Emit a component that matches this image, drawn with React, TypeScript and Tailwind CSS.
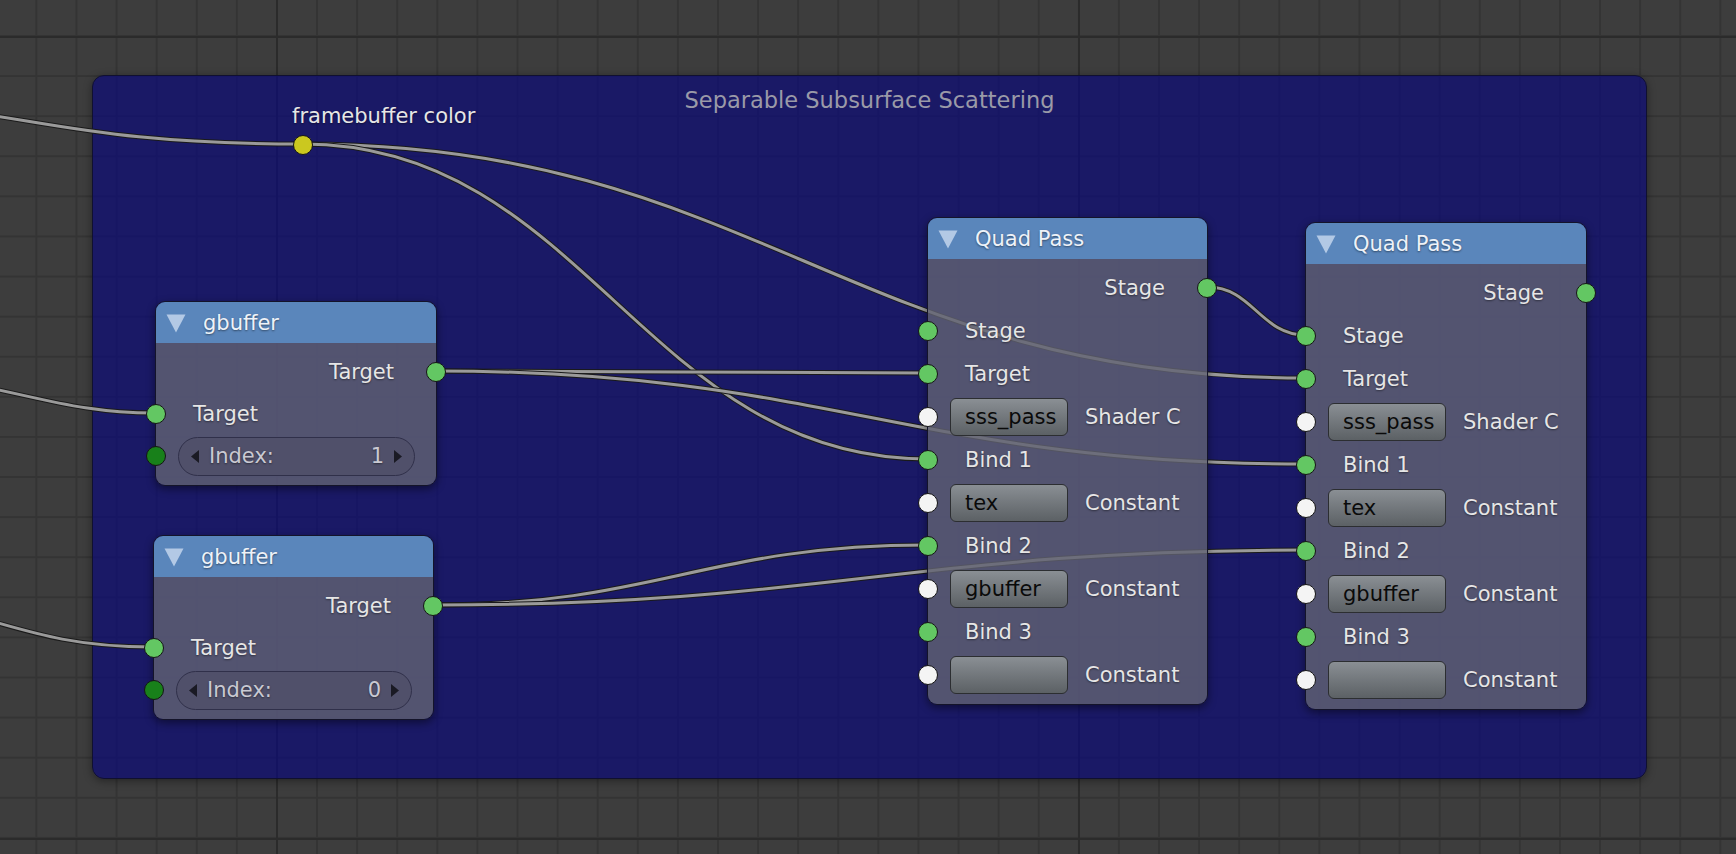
import React from 'react';

type Row =
  | { kind: 'out'; label: string }
  | { kind: 'in'; label: string }
  | { kind: 'field'; value: string; label: string }
  | { kind: 'index'; value: string };

type NodeData = {
  x: number;
  y: number;
  w: number;
  title: string;
  rowH: number;
  pad: number;
  rows: Row[];
};

type Pt = [number, number];

const HEADER = 41;

const quadRows: Row[] = [
  { kind: 'out', label: 'Stage' },
  { kind: 'in', label: 'Stage' },
  { kind: 'in', label: 'Target' },
  { kind: 'field', value: 'sss_pass', label: 'Shader C' },
  { kind: 'in', label: 'Bind 1' },
  { kind: 'field', value: 'tex', label: 'Constant' },
  { kind: 'in', label: 'Bind 2' },
  { kind: 'field', value: 'gbuffer', label: 'Constant' },
  { kind: 'in', label: 'Bind 3' },
  { kind: 'field', value: '', label: 'Constant' },
];

const gb1: NodeData = {
  x: 155,
  y: 301,
  w: 282,
  title: 'gbuffer',
  rowH: 42,
  pad: 8,
  rows: [
    { kind: 'out', label: 'Target' },
    { kind: 'in', label: 'Target' },
    { kind: 'index', value: '1' },
  ],
};

const gb2: NodeData = {
  x: 153,
  y: 535,
  w: 281,
  title: 'gbuffer',
  rowH: 42,
  pad: 8,
  rows: [
    { kind: 'out', label: 'Target' },
    { kind: 'in', label: 'Target' },
    { kind: 'index', value: '0' },
  ],
};

const qp1: NodeData = { x: 927, y: 217, w: 281, title: 'Quad Pass', rowH: 43, pad: 7.5, rows: quadRows };
const qp2: NodeData = { x: 1305, y: 222, w: 282, title: 'Quad Pass', rowH: 43, pad: 7.5, rows: quadRows };

const reroute: Pt = [303, 144];

const sockY = (n: NodeData, i: number) => n.y + HEADER + n.pad + n.rowH * (i + 0.5);
const inPt = (n: NodeData, i: number): Pt => [n.x, sockY(n, i)];
const outPt = (n: NodeData, i: number): Pt => [n.x + n.w, sockY(n, i)];

// blender style noodle: horizontal handles
const link = ([x0, y0]: Pt, [x1, y1]: Pt) => {
  const h = Math.abs(x1 - x0) * 0.45;
  return `M ${x0} ${y0} C ${x0 + h} ${y0}, ${x1 - h} ${y1}, ${x1} ${y1}`;
};

const g1in = inPt(gb1, 1);
const g2in = inPt(gb2, 1);

const wires = [
  `M -250 98 C 26 98, 27 144, ${reroute[0]} ${reroute[1]}`,
  `M -40 382 C 40 397, 80 ${g1in[1]}, ${g1in[0]} ${g1in[1]}`,
  `M -40 612 C 30 632, 70 ${g2in[1]}, ${g2in[0]} ${g2in[1]}`,
  link(reroute, inPt(qp2, 2)),
  link(reroute, inPt(qp1, 4)),
  link(outPt(gb1, 0), inPt(qp1, 2)),
  link(outPt(gb1, 0), inPt(qp2, 4)),
  link(outPt(gb2, 0), inPt(qp1, 6)),
  link(outPt(gb2, 0), inPt(qp2, 6)),
  link(outPt(qp1, 0), inPt(qp2, 1)),
];

const Socket = ({ color, side }: { color: string; side: 'left' | 'right' }) => (
  <span
    className={`absolute top-1/2 h-[20px] w-[20px] -translate-y-1/2 rounded-full border-[1.5px] border-[#151515] ${color} ${
      side === 'left' ? '-left-[10px]' : '-right-[10px]'
    }`}
  />
);

const Arrow = ({ dir }: { dir: 'l' | 'r' }) => (
  <svg width="8" height="13" viewBox="0 0 8 13">
    <path d={dir === 'l' ? 'M8 0 L0 6.5 L8 13 Z' : 'M0 0 L8 6.5 L0 13 Z'} fill="#1a1a24" />
  </svg>
);

const NodeRow = ({ row, h }: { row: Row; h: number }) => {
  if (row.kind === 'out') {
    return (
      <div className="relative flex items-center justify-end pr-[42px]" style={{ height: h }}>
        <span>{row.label}</span>
        <Socket color="bg-[#63c763]" side="right" />
      </div>
    );
  }
  if (row.kind === 'in') {
    return (
      <div className="relative flex items-center pl-[37px]" style={{ height: h }}>
        <span>{row.label}</span>
        <Socket color="bg-[#63c763]" side="left" />
      </div>
    );
  }
  if (row.kind === 'field') {
    return (
      <div className="relative flex items-center gap-[17px] pl-[22px]" style={{ height: h }}>
        <div className="flex h-[38px] w-[118px] items-center rounded-[6px] border border-[#2c2e31] bg-gradient-to-b from-[#8a8f94] to-[#5c6165] pl-[14px] text-[#0a0a0a] [text-shadow:none]">
          {row.value}
        </div>
        <span>{row.label}</span>
        <Socket color="bg-[#f4f4f4]" side="left" />
      </div>
    );
  }
  return (
    <div className="relative flex items-center pl-[22px] pr-[21px]" style={{ height: h }}>
      <div className="flex h-[39px] flex-1 items-center gap-[10px] rounded-full border border-[#30304a] bg-[#50506a] px-[12px] text-[#c9c9d2]">
        <Arrow dir="l" />
        <span>Index:</span>
        <span className="ml-auto">{row.value}</span>
        <Arrow dir="r" />
      </div>
      <Socket color="bg-[#18801a]" side="left" />
    </div>
  );
};

const Node = ({ n }: { n: NodeData }) => (
  <div
    className="absolute flex flex-col rounded-[10px] border border-[#14142a] shadow-[0_3px_8px_rgba(0,0,0,0.45)]"
    style={{ left: n.x, top: n.y, width: n.w }}
  >
    <div className="flex h-[41px] items-center gap-[17px] rounded-t-[9px] bg-[#5a86bb] pl-[10px] pt-[2px]">
      <svg width="20" height="19" viewBox="0 0 20 19">
        <path d="M0.5 0.5 H19.5 L10 18.5 Z" fill="#bcd0ea" fillOpacity="0.9" />
      </svg>
      <span className="text-[#eef2f8]">{n.title}</span>
    </div>
    <div className="rounded-b-[9px] bg-[rgba(98,99,115,0.8)]" style={{ paddingTop: n.pad, paddingBottom: n.pad }}>
      {n.rows.map((r, i) => (
        <NodeRow key={i} row={r} h={n.rowH} />
      ))}
    </div>
  </div>
);

export default function App() {
  return (
    <div className="relative h-[854px] w-[1736px] overflow-hidden bg-[#3d3d3d] bg-[linear-gradient(to_right,#2b2b2b_2px,transparent_2px),linear-gradient(to_bottom,#2b2b2b_2px,transparent_2px),linear-gradient(to_right,#343434_2px,transparent_2px),linear-gradient(to_bottom,#343434_2px,transparent_2px)] bg-[size:802px_802px,802px_802px,40.1px_40.1px,40.1px_40.1px] bg-[position:276px_36px,276px_36px,35.4px_35px,35.4px_35px] font-['DejaVu_Sans',sans-serif] text-[21px] leading-none text-[#e6e6e6] [text-shadow:0_1px_2px_rgba(0,0,0,0.45)]">
      {/* frame */}
      <div className="absolute left-[92px] top-[75px] h-[704px] w-[1555px] rounded-[12px] border border-[#101030] bg-[rgba(12,10,120,0.7)] shadow-[0_2px_8px_rgba(0,0,0,0.4)]">
        <div className="flex justify-center pt-[13px] text-[22.5px] text-[#9a9aa8] [text-shadow:none]">
          Separable Subsurface Scattering
        </div>
      </div>

      {/* links */}
      <svg className="pointer-events-none absolute inset-0" width="1736" height="854">
        {wires.map((d, i) => (
          <g key={i} fill="none">
            <path d={d} stroke="#1a1a1a" strokeWidth="5" />
            <path d={d} stroke="#9a9a9a" strokeWidth="3" />
          </g>
        ))}
      </svg>

      <Node n={gb1} />
      <Node n={gb2} />
      <Node n={qp1} />
      <Node n={qp2} />

      {/* reroute */}
      <div className="absolute left-[292px] top-[106px] flex flex-col items-start gap-[8px]">
        <span>framebuffer color</span>
        <span className="ml-[1px] h-[20px] w-[20px] rounded-full border-[1.5px] border-[#151515] bg-[#cbc81f]" />
      </div>
    </div>
  );
}
